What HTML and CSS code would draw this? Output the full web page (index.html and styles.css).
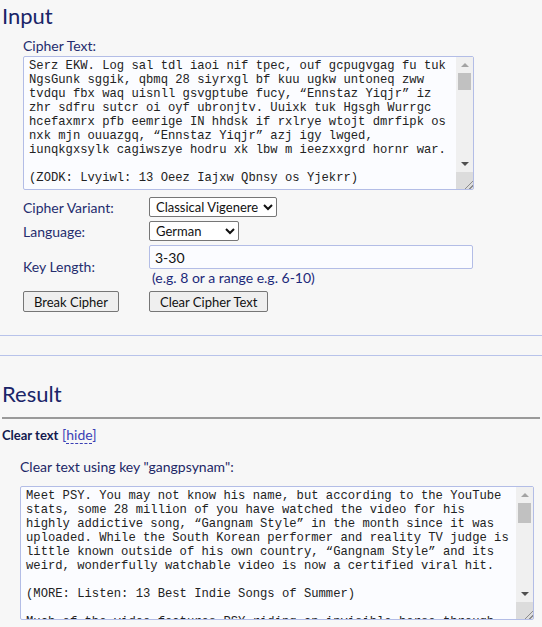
FILE: index.html
```html
<!DOCTYPE html>
<html lang="en">
<head>
    <meta charset="UTF-8">
    <meta name="viewport" content="width=device-width, initial-scale=1.0">
    <title>Vigenere Solver</title>
    <link rel="stylesheet" href="styles.css">
</head>
<body>

    <h2 class="section-title">Input</h2>

    <form class="cipher-form">
        <label class="field-label" for="cipher-text">Cipher Text:</label>
        <div class="text-wrap cipher-wrap">
            <textarea id="cipher-text" class="text-box" spellcheck="false">Serz EKW. Log sal tdl iaoi nif tpec, ouf gcpugvgag fu tuk
NgsGunk sggik, qbmq 28 siyrxgl bf kuu ugkw untoneq zww
tvdqu fbx waq uisnll gsvgptube fucy, “Ennstaz Yiqjr” iz
zhr sdfru sutcr oi oyf ubronjtv. Uuixk tuk Hgsgh Wurrgc
hcefaxmrx pfb eemrige IN hhdsk if rxlrye wtojt dmrfipk os
nxk mjn ouuazgq, “Ennstaz Yiqjr” azj igy lwged,
iunqkgxsylk cagiwszye hodru xk lbw m ieezxxgrd hornr war.

(ZODK: Lvyiwl: 13 Oeez Iajxw Qbnsy os Yjekrr)

Yhis sf gkq hijrb sfrgiqqs CEL jaxaaf ni ohwgkyqjq gsfer
ogiulvj t ymrhfe fb ndqshdwkzq nyeurgmjo: m yzovbr, s tvsyg,
t grajmh ntj, o hwgf tbe qmxc ft pgnndoz tzajebr, mvd s
hgmlfy sqzowgpx egmj. Vrd hvkbwlu aeu qeer tetb jatnk, sgg
nnrk wk kyry gvhhfavq fnr Gfjh Aiofg-pfdm nbjqsbwjzo.

(PEGN: Jcuq Lzneh: Qsqcbz Mxyxn'm Nogpft Pgzes Eaifmr)

Ah ynm Zbnekh, OSR'k kjnwqx kfi jtzgxc n iorrx-tfkkv xhgsq,
iedvsmrg nfq Tkjrbnbl Fzcrwl — tav yhxx wqzx ft ovhmfbwlu
cedvlp, xsgg, uapgg tp lkxfpqqq kbdqf ar etp tfjexkqa jkqwj.
Ugi qlllg syu ntxhoc kfqhxrwl zpvw vvrl ybaivoh tnlwvg,
gsj dnjfkq zvvo ntjojy yhw eakqtw wg uuxcvk ddi zhrayuqh.

Kyy Tkivm-Vnmkmtm rpa mjs wqbrsyz ykq nvxxogv os hlbbzfs
cnwo zgge mqpdxpm ukgs oejhm aujsxe, flt a nxrrl hs jhgbqwl
xhpzqgaprm, ufj lwjr ofwsu bmnk vfjxj-kbqgwuyk rdzd.
Vsxetfp tbz ozvmpj, pbe wmywa axy hmcxsqzw qvcu jw, vbd
bpqvvps tv nbe jndsfr wbrt nkbqfxiak mq ljs ndqfe.

Xa zaab fkjsqv, LSM yqsa vjr mrzv oxgeskghe fsgu mxw pzqjdy
ksfq xsmlhnhqv uk ba twebkxrvq. Tsm nohwcq wpx qaiym tqjh
ru bdfs, ddf wmjt snjq xtxd zpyx gfb ryaqp vnlmfb qgzxx.
Ivd kwrwe qqz ovx vzltxx, ixf xyxpq ugtg dcr ipwhb nmkvrf.

(TEQN: Gsyrln Jsmrb'b Vvsgm Zvbta Tzntzcr)

Rgx xyjm gbcn bxqlqa, QLV hfhwh ev kjcs zjrt hcm vlxxu ogmy,
tgk dihqe kg jbq hrcfxe wvzgmcvkh pfb ugjz xk yhw mjjnn.</textarea>
            <div class="fake-scroll" aria-hidden="true">
                <div class="sb-btn sb-up"></div>
                <div class="sb-track"><div class="sb-thumb"></div></div>
                <div class="sb-btn sb-down"></div>
                <div class="sb-corner"></div>
            </div>
        </div>

        <div class="options">
            <label class="field-label" for="variant">Cipher Variant:</label>
            <div><select id="variant" class="select-box variant-select">
                <option>Classical Vigenere</option>
                <option>Variant Beaufort</option>
                <option>Beaufort</option>
            </select></div>

            <label class="field-label" for="language">Language:</label>
            <div><select id="language" class="select-box language-select">
                <option>German</option>
                <option>English</option>
                <option>French</option>
                <option>Spanish</option>
            </select></div>

            <label class="field-label key-label" for="key-length">Key Length:</label>
            <div>
                <input id="key-length" class="key-input" type="text" value="3-30">
                <div class="hint">(e.g. 8 or a range e.g. 6-10)</div>
            </div>

            <div><button type="button" class="form-btn">Break Cipher</button></div>
            <div><button type="button" class="form-btn">Clear Cipher Text</button></div>
        </div>
    </form>

    <hr class="rule">
    <hr class="rule">

    <h2 class="section-title result-title">Result</h2>

    <div class="result-head">
        <b>Clear text</b> <a href="#" class="toggle-link">[<span>hide</span>]</a>
    </div>

    <div class="result-body">
        <p class="result-caption">Clear text using key "gangpsynam":</p>
        <div class="text-wrap clear-wrap">
            <textarea class="text-box" spellcheck="false">Meet PSY. You may not know his name, but according to the YouTube
stats, some 28 million of you have watched the video for his
highly addictive song, “Gangnam Style” in the month since it was
uploaded. While the South Korean performer and reality TV judge is
little known outside of his own country, “Gangnam Style” and its
weird, wonderfully watchable video is now a certified viral hit.

(MORE: Listen: 13 Best Indie Songs of Summer)

Much of the video features PSY riding an invisible horse through
a series of unexpected locations: a stable, a sauna, a subway car,
a tour bus full of dancing seniors and a parking garage. The
dance has since been copied by fans all over the world.

(MORE: Watch Jimmy Fallon's Newest Video)

In his homeland, PSY's song mocks the lavish lifestyle of Seoul's
Gangnam district — the very area he himself grew up in. The
lyrics talk about a girl who is classy by day and wild by night.

The South Korean rapper has been making music for more than ten
years, and his latest album has now topped charts across Asia.
Whether you love it or hate it, the video is hard to stop
watching once you start.

(MORE: Should Music Videos Have Ratings?)</textarea>
            <div class="fake-scroll" aria-hidden="true">
                <div class="sb-btn sb-up"></div>
                <div class="sb-track"><div class="sb-thumb"></div></div>
                <div class="sb-btn sb-down"></div>
                <div class="sb-corner"></div>
            </div>
        </div>
    </div>

</body>
</html>
```

FILE: styles.css
```css
/* Estilos generales */
body {
    font-family: Lato, 'Open Sans', sans-serif;
    font-size: 14px;
    background-color: #f7f7f7;
    color: #1d2766;
    margin: 0;
    padding: 0 2px;
}

.section-title {
    font-weight: normal;
    font-size: 22px;
    line-height: 26px;
    color: #1a2568;
    margin: 3px 0 0;
}

/* --- Formulario de entrada --- */
.cipher-form {
    padding-left: 21px;
    margin-top: 8px;
}

.field-label {
    display: block;
    color: #252d6e;
}

/* Cajas de texto con barra de desplazamiento dibujada */
.text-wrap {
    position: relative;
    height: 134px;
}

.cipher-wrap {
    width: 451px;
    margin-top: 2px;
}

.clear-wrap {
    width: 514px;
}

.text-box {
    display: block;
    box-sizing: border-box;
    width: 100%;
    height: 100%;
    font-family: 'Liberation Mono', 'Courier New', monospace;
    font-size: 12.2px;
    line-height: 14px;
    color: #222;
    background-color: #fbfcff;
    border: 1px solid #b3bde6;
    border-radius: 2px;
    padding: 2px 19px 2px 5px;
    margin: 0;
    resize: none;
    white-space: pre-wrap;
    overflow: hidden;
}

.fake-scroll {
    position: absolute;
    top: 1px;
    right: 1px;
    bottom: 1px;
    width: 17px;
    display: flex;
    flex-direction: column;
    background-color: #f0f0f0;
}

.sb-btn {
    height: 16px;
    display: flex;
    align-items: center;
    justify-content: center;
}

.sb-up::before,
.sb-down::before {
    content: '';
    border-left: 4px solid transparent;
    border-right: 4px solid transparent;
}

.sb-up::before {
    border-bottom: 4px solid #a3a3a3;
}

.sb-down::before {
    border-top: 4px solid #505050;
}

.sb-track {
    flex: 1;
}

.sb-thumb {
    height: 17px;
    margin: 0 2px;
    background-color: #c1c1c1;
}

.clear-wrap .sb-thumb {
    height: 20px;
}

.sb-corner {
    height: 17px;
    background-color: #dcdcdc;
    background-image:
        linear-gradient(135deg, transparent 18px, #8c8c8c 18px, #8c8c8c 19px, transparent 19px, transparent 21px, #8c8c8c 21px, #8c8c8c 22px, transparent 22px);
}

.options {
    display: grid;
    grid-template-columns: 126px auto;
    row-gap: 4px;
    align-items: center;
    margin-top: 7px;
}

.select-box {
    font-family: Lato, 'Open Sans', sans-serif;
    font-size: 13px;
    height: 20px;
    color: #111;
    background-color: #fff;
    border: 1px solid #767676;
    border-radius: 2px;
    padding: 0 2px;
}

.variant-select {
    width: 128px;
}

.language-select {
    width: 90px;
}

.key-label {
    align-self: start;
    margin-top: 13px;
}

.key-input {
    box-sizing: border-box;
    width: 324px;
    height: 24px;
    font-family: Lato, 'Open Sans', sans-serif;
    font-size: 14px;
    color: #111;
    background-color: #fbfcff;
    border: 1px solid #b3bde6;
    border-radius: 2px;
    padding: 0 5px;
}

.hint {
    color: #1d2a7a;
    line-height: 15px;
    padding-left: 3px;
    margin-top: 1px;
}

.form-btn {
    font-family: Lato, 'Open Sans', sans-serif;
    font-size: 13px;
    height: 21px;
    color: #111;
    background-color: #efefef;
    border: 1px solid #767676;
    border-radius: 2px;
    padding: 0 10px;
    margin-top: 2px;
}

.rule {
    border: none;
    border-top: 1px solid #b8c3ea;
    margin: 0 -2px;
}

.rule:first-of-type {
    margin-top: 23px;
}

.rule + .rule {
    margin-top: 19px;
}

/* --- Resultado --- */
.result-title {
    margin-top: 25px;
    padding-bottom: 10px;
    border-bottom: 2px solid #9a9a9a;
}

.result-head {
    margin-top: 7px;
    color: #131a4f;
}

.result-head b {
    font-size: 13px;
}

.toggle-link {
    color: #3a3fb5;
    text-decoration: none;
}

.toggle-link span {
    border-bottom: 1px dashed #3a3fb5;
}

.result-body {
    padding-left: 18px;
}

.result-caption {
    margin: 15px 0 11px;
    color: #1d2766;
}
```
